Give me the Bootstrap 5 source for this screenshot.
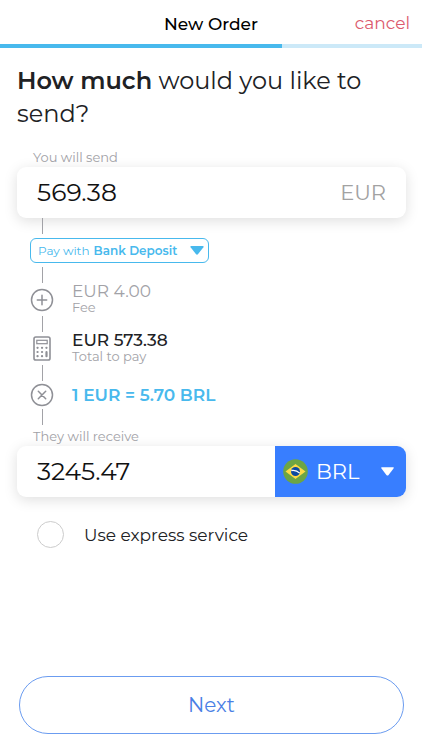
<!DOCTYPE html>
<html lang="en">
<head>
<meta charset="utf-8">
<meta name="viewport" content="width=device-width, initial-scale=1">
<title>New Order</title>
<link href="https://cdn.jsdelivr.net/npm/bootstrap@5.3.0/dist/css/bootstrap.min.css" rel="stylesheet">
<style>
  :root { --sky: #48b9ed; --blue: #387eff; --muted: #a2a2a7; --ink: #202124; }
  body { font-family: Montserrat, Inter, "Open Sans", sans-serif; color: #111; background: #fff; }
  .topbar { height: 44px; padding-top: 3px; }
  .topbar h1 { font-size: 17px; line-height: 24px; font-weight: 500; color: #000; }
  .topbar a { font-size: 17px; line-height: 24px; font-weight: 400; color: #dc5a6d; }
  .order-progress { height: 4px; border-radius: 0; background: #cce9f8; }
  .order-progress .progress-bar { background: var(--sky); }
  .order-main { padding: 16px 16px 0 17px; }
  .order-question { font-size: 24px; line-height: 33px; font-weight: 400; color: var(--ink); }
  .order-question strong { font-weight: 600; }
  .caption { font-size: 13px; line-height: 15px; padding-bottom: 2px; color: var(--muted); }
  .amount-box { height: 51px; border-radius: 9px; background: #fff; box-shadow: 0 3px 14px rgba(0, 0, 0, .13); }
  .amount-box input { font-size: 25px; min-width: 0; color: #111; background: transparent; padding-bottom: 3px; }
  .unit { font-size: 21px; color: #a2a2a2; }
  .currency { width: 131px; background: var(--blue); border-radius: 0 9px 9px 0; color: #fff; }
  .plain-select { appearance: none; border: 0; padding: 0; background: transparent; color: inherit; }
  .plain-select option { color: #111; background: #fff; }
  .currency select { font-size: 21px; line-height: 28px; }
  .flow { padding-left: 13px; }
  .rail { width: 24px; }
  .rail-line { width: 1px; background: #a2a2a7; }
  .rail-link { height: 16px; }
  .rail-half { height: 8px; }
  .step { height: 49px; }
  .step-last { height: 44px; }
  .step-text { padding-left: 18px; }
  .pay-method { height: 25px; width: 179px; border: 1px solid #48b9ed; border-radius: 6px; color: #48b9ed; font-size: 12px; line-height: 18px; padding-left: 7px; }
  .pay-method select { font-weight: 600; }
  .step-value { font-size: 17px; line-height: 18px; color: var(--muted); }
  .step-total { color: var(--ink); font-weight: 500; }
  .step-rate { color: var(--sky); font-weight: 600; }
  .step-note { font-size: 13px; line-height: 14px; color: var(--muted); }
  .express { padding-left: 20px; }
  .express input { width: 27px; height: 27px; border-color: #ccc; }
  .express label { font-size: 17px; line-height: 24px; color: var(--ink); }
  .next-wrap { padding: 24px 2px 16px; }
  .next-btn { height: 58px; font-size: 20px; color: #4a7fe5; border: 1px solid #6b9cf0; }
</style>
</head>
<body>
<div class="min-vh-100 d-flex flex-column">
  <header>
    <div class="topbar row g-0 align-items-center">
      <h1 class="col-6 offset-3 text-center mb-0">New Order</h1>
      <div class="col-3 text-end pe-2"><a href="#" class="text-decoration-none me-1">cancel</a></div>
    </div>
    <div class="progress order-progress" role="progressbar" aria-label="Order progress" aria-valuenow="67" aria-valuemin="0" aria-valuemax="100">
      <div class="progress-bar" style="width: 66.8%"></div>
    </div>
  </header>

  <main class="order-main flex-grow-1 d-flex flex-column">
    <h2 class="order-question mb-3 pb-1"><strong>How much</strong> would you like to send?</h2>

    <label for="send" class="caption ms-3 mb-0">You will send</label>
    <div class="amount-box d-flex align-items-center">
      <input id="send" type="text" inputmode="decimal" value="569.38" class="border-0 flex-grow-1 h-100 ps-3 ms-1">
      <span class="unit pe-3 me-1">EUR</span>
    </div>

    <div class="flow">
      <div class="rail d-flex justify-content-center pb-1"><span class="rail-line rail-link"></span></div>
      <div class="pay-method d-flex align-items-center">
        <label for="method" class="me-1 text-nowrap">Pay with</label>
        <select id="method" class="plain-select"><option>Bank Deposit</option></select>
        <svg class="ms-auto me-1 pe-none" width="14" height="9" viewBox="0 0 12 8" aria-hidden="true"><path d="M1 0h10q1.400 0 .7 1.100L7 7.200q-1 1.200-2 0L.3 1.100Q-.4 0 1 0z" fill="currentColor"/></svg>
      </div>
      <div class="rail d-flex justify-content-center pt-1"><span class="rail-line rail-half"></span></div>

      <div class="step d-flex">
        <div class="rail d-flex flex-column align-items-center justify-content-between">
          <span class="rail-line rail-half"></span>
          <svg width="24" height="24" viewBox="0 0 24 24" fill="none" stroke="#8f9096" stroke-width="1.500" stroke-linecap="round" aria-hidden="true"><circle cx="12" cy="12" r="10.500"/><path d="M12 7.300v9.400M7.300 12h9.400"/></svg>
          <span class="rail-line rail-half"></span>
        </div>
        <div class="step-text pb-1 align-self-center">
          <div class="step-value">EUR 4.00</div>
          <div class="step-note">Fee</div>
        </div>
      </div>

      <div class="step d-flex">
        <div class="rail d-flex flex-column align-items-center justify-content-between">
          <span class="rail-line rail-half"></span>
          <svg width="18" height="25" viewBox="0 0 18 25" fill="none" stroke="#8f9096" aria-hidden="true"><rect x="1" y="1" width="16" height="23" rx="1.800" stroke-width="1.600"/><rect x="3.800" y="4.300" width="10.400" height="3.400" stroke-width="1.200"/><path d="M4.500 11.800h.1M9 11.800h.1M13.400 11.800h.1M4.500 16h.1M9 16h.1M4.500 20.200h.1M9 20.200h.1M13.500 16.200v4" stroke-width="2.200" stroke-linecap="round"/></svg>
          <span class="rail-line rail-half"></span>
        </div>
        <div class="step-text pb-1 align-self-center">
          <div class="step-value step-total">EUR 573.38</div>
          <div class="step-note">Total to pay</div>
        </div>
      </div>

      <div class="step step-last d-flex">
        <div class="rail d-flex flex-column align-items-center justify-content-between">
          <span class="rail-line rail-half"></span>
          <svg width="24" height="24" viewBox="0 0 24 24" fill="none" stroke="#8f9096" stroke-width="1.500" stroke-linecap="round" aria-hidden="true"><circle cx="12" cy="12" r="10.500"/><path d="M8.300 8.300l7.400 7.400M15.700 8.300l-7.400 7.400"/></svg>
          <span class="rail-line rail-half"></span>
        </div>
        <div class="step-text align-self-center">
          <div class="step-value step-rate">1 EUR = 5.70 BRL</div>
        </div>
      </div>
      <div class="rail d-flex justify-content-center"><span class="rail-line rail-half"></span></div>
    </div>

    <label for="receive" class="caption ms-3 mt-1">They will receive</label>
    <div class="amount-box d-flex align-items-center">
      <input id="receive" type="text" inputmode="decimal" value="3245.47" class="border-0 flex-grow-1 h-100 ps-3 ms-1">
      <div class="currency h-100 flex-shrink-0 d-flex align-items-center px-2">
        <svg class="flex-shrink-0 me-2" width="25" height="25" viewBox="0 0 25 25" aria-hidden="true"><circle cx="12.500" cy="12.500" r="12.300" fill="#6da544"/><path d="M12.500 5l10 7.500-10 7.500-10-7.500z" fill="#ffda44"/><circle cx="12.500" cy="12.500" r="4.500" fill="#0e4aa0"/><path d="M8.300 11.500q5-.8 8.400 2.600" stroke="#fff" stroke-width="1.300" fill="none"/></svg>
        <select class="plain-select" aria-label="Currency to receive"><option>BRL</option></select>
        <svg class="ms-auto me-1 pe-none" width="13" height="9" viewBox="0 0 12 8" aria-hidden="true"><path d="M1 0h10q1.400 0 .7 1.100L7 7.200q-1 1.200-2 0L.3 1.100Q-.4 0 1 0z" fill="currentColor"/></svg>
      </div>
    </div>

    <div class="express d-flex align-items-center mt-4">
      <input id="express" type="radio" class="form-check-input m-0">
      <label for="express" class="ps-3 ms-1">Use express service</label>
    </div>

    <div class="next-wrap mt-auto">
      <button type="button" class="btn next-btn rounded-pill w-100">Next</button>
    </div>
  </main>
</div>
<script src="https://cdn.jsdelivr.net/npm/bootstrap@5.3.0/dist/js/bootstrap.bundle.min.js"></script>
</body>
</html>
